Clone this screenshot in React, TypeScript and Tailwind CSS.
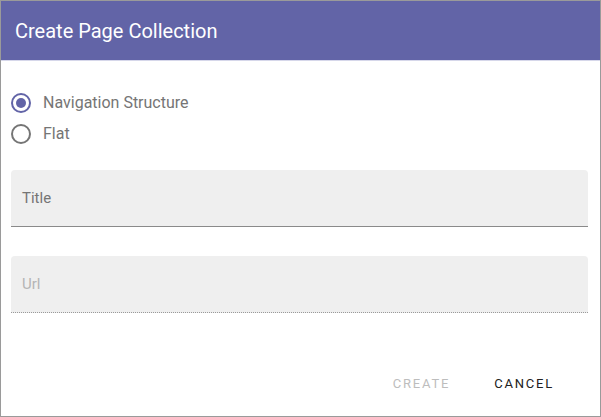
import React, { useState } from 'react';

const App: React.FC = () => {
  const [mode, setMode] = useState<'nav' | 'flat'>('nav');

  const options = [
    { id: 'nav' as const, label: 'Navigation Structure' },
    { id: 'flat' as const, label: 'Flat' },
  ];

  return (
    <div className="w-[601px] h-[417px] bg-white border border-[#9a9a9a] flex flex-col font-['Roboto',sans-serif]">
      {/* Header */}
      <div className="h-[60px] bg-[#6264a7] border-b border-[#d6d7ea] flex items-center px-[14px] shrink-0">
        <h2 className="text-white text-[20px] leading-none">Create Page Collection</h2>
      </div>

      {/* Body */}
      <div className="flex-1 flex flex-col px-[10px] pt-[31px]">
        <div className="flex flex-col gap-[10px]">
          {options.map((opt) => (
            <label key={opt.id} className="flex items-center h-[21px] cursor-pointer" onClick={() => setMode(opt.id)}>
              <span
                className={`w-[20px] h-[20px] rounded-full border-2 flex items-center justify-center ${
                  mode === opt.id ? 'border-[#6264a7]' : 'border-[#757575]'
                }`}
              >
                {mode === opt.id && <span className="w-[10px] h-[10px] rounded-full bg-[#6264a7]" />}
              </span>
              <span className="ml-[12px] text-[16px] text-[#757575]">{opt.label}</span>
            </label>
          ))}
        </div>

        <div className="mt-[26px] h-[57px] bg-[#efefef] rounded-t-[4px] border-b border-[#8a8a8a] flex items-center px-[11px] mr-[2px]">
          <span className="text-[15px] text-[#757575]">Title</span>
        </div>

        <div className="mt-[29px] h-[57px] bg-[#efefef] rounded-t-[4px] border-b border-dotted border-[#9a9a9a] flex items-center px-[11px] mr-[2px]">
          <span className="text-[15px] text-[#b5b5b5]">Url</span>
        </div>

        <div className="mt-auto mb-[23px] flex justify-end items-center gap-[44px] pr-[36px]">
          <button className="text-[13px] tracking-[1.8px] text-[#bdbdbd]">CREATE</button>
          <button className="text-[13px] tracking-[1.8px] text-[#212121]">CANCEL</button>
        </div>
      </div>
    </div>
  );
};

export default App;
